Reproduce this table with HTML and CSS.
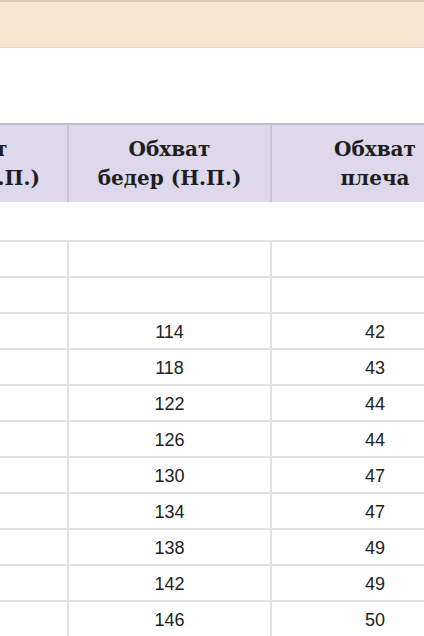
FILE: index.html
```html
<!DOCTYPE html>
<html lang="ru">
<head>
<meta charset="utf-8">
<title>Таблица размеров</title>
<link rel="stylesheet" href="styles.css">
</head>
<body>
<div class="page">
  <div class="topline"></div>
  <div class="banner"></div>
  <div class="blank"></div>
  <div class="sheet">
    <div class="hcell">Обхват<br>талии (Н.П.)</div>
    <div class="hcell">Обхват<br>бедер (Н.П.)</div>
    <div class="hcell">Обхват<br>плеча</div>

    <div class="gap"></div>

    <div class="cell"></div><div class="cell"></div><div class="cell"></div>
    <div class="cell"></div><div class="cell"></div><div class="cell"></div>
    <div class="cell"></div><div class="cell">114</div><div class="cell">42</div>
    <div class="cell"></div><div class="cell">118</div><div class="cell">43</div>
    <div class="cell"></div><div class="cell">122</div><div class="cell">44</div>
    <div class="cell"></div><div class="cell">126</div><div class="cell">44</div>
    <div class="cell"></div><div class="cell">130</div><div class="cell">47</div>
    <div class="cell"></div><div class="cell">134</div><div class="cell">47</div>
    <div class="cell"></div><div class="cell">138</div><div class="cell">49</div>
    <div class="cell"></div><div class="cell">142</div><div class="cell">49</div>
    <div class="cell"></div><div class="cell">146</div><div class="cell">50</div>
  </div>
</div>
</body>
</html>
```
FILE: styles.css
```css
html, body {
  margin: 0;
  padding: 0;
  background: #ffffff;
}
body {
  width: 424px;
  height: 636px;
  overflow: hidden;
}
.page {
  display: flex;
  flex-direction: column;
}
.topline {
  height: 2px;
  background: #d9c9c1;
}
.banner {
  height: 45px;
  background: #f9e6d1;
  border-bottom: 1px solid #e3ddd4;
}
.blank {
  height: 75px;
}
.sheet {
  margin-left: -134px;
  display: grid;
  grid-template-columns: 203px 203px 208px;
  border-top: 2px solid #c3bfc8;
}
.hcell {
  box-sizing: border-box;
  height: 77px;
  background: #ddd8eb;
  border-right: 2px solid #cbc5d8;
  display: flex;
  align-items: center;
  justify-content: center;
  text-align: center;
  font-family: "DejaVu Serif", "Liberation Serif", serif;
  font-weight: bold;
  font-size: 20px;
  line-height: 29px;
  color: #1e1e1e;
  padding-top: 1px;
}
.gap {
  grid-column: 1 / -1;
  height: 38px;
  border-bottom: 2px solid #e1e1e1;
}
.cell {
  box-sizing: border-box;
  height: 36px;
  border-right: 2px solid #e1e1e1;
  border-bottom: 2px solid #e1e1e1;
  display: flex;
  align-items: center;
  justify-content: center;
  font-family: "Liberation Sans", Arial, sans-serif;
  font-size: 18px;
  color: #222222;
  padding-top: 2px;
}
```
